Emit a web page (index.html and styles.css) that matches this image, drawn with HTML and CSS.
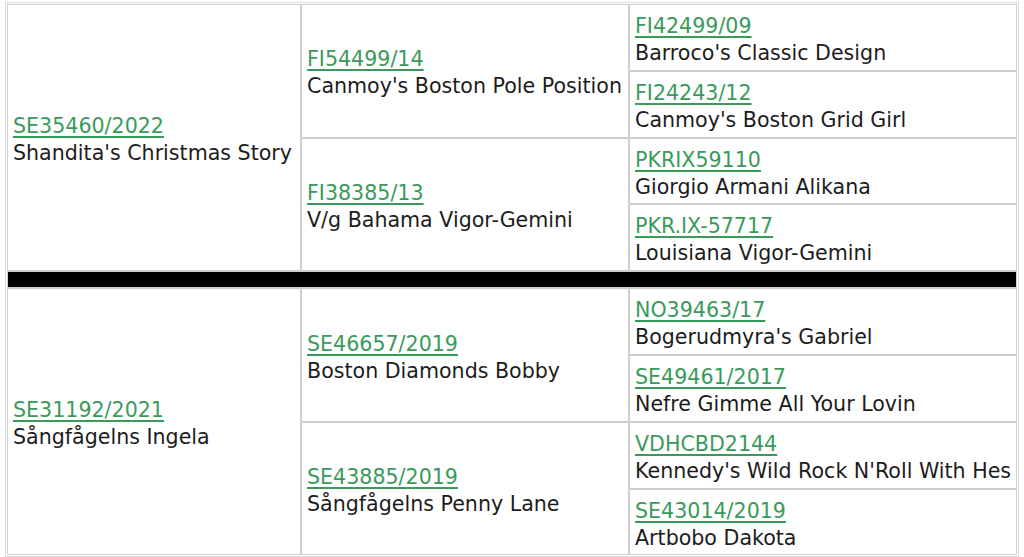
FILE: index.html
```html
<!DOCTYPE html>
<html>
<head>
<meta charset="utf-8">
<link rel="stylesheet" href="styles.css">
</head>
<body>
<table class="pedigree">
  <colgroup><col class="c1"><col class="c2"><col class="c3"></colgroup>
  <tr>
    <td rowspan="4"><a href="#">SE35460/2022</a><div class="name">Shandita's Christmas Story</div></td>
    <td rowspan="2"><a href="#">FI54499/14</a><div class="name">Canmoy's Boston Pole Position</div></td>
    <td><a href="#">FI42499/09</a><div class="name">Barroco's Classic Design</div></td>
  </tr>
  <tr>
    <td><a href="#">FI24243/12</a><div class="name">Canmoy's Boston Grid Girl</div></td>
  </tr>
  <tr>
    <td rowspan="2"><a href="#">FI38385/13</a><div class="name">V/g Bahama Vigor-Gemini</div></td>
    <td><a href="#">PKRIX59110</a><div class="name">Giorgio Armani Alikana</div></td>
  </tr>
  <tr>
    <td><a href="#">PKR.IX-57717</a><div class="name">Louisiana Vigor-Gemini</div></td>
  </tr>
  <tr class="sep"><td colspan="3"></td></tr>
  <tr>
    <td rowspan="4"><a href="#">SE31192/2021</a><div class="name">Sångfågelns Ingela</div></td>
    <td rowspan="2"><a href="#">SE46657/2019</a><div class="name">Boston Diamonds Bobby</div></td>
    <td><a href="#">NO39463/17</a><div class="name">Bogerudmyra's Gabriel</div></td>
  </tr>
  <tr>
    <td><a href="#">SE49461/2017</a><div class="name">Nefre Gimme All Your Lovin</div></td>
  </tr>
  <tr>
    <td rowspan="2"><a href="#">SE43885/2019</a><div class="name">Sångfågelns Penny Lane</div></td>
    <td><a href="#">VDHCBD2144</a><div class="name">Kennedy's Wild Rock N'Roll With Hes</div></td>
  </tr>
  <tr>
    <td><a href="#">SE43014/2019</a><div class="name">Artbobo Dakota</div></td>
  </tr>
</table>
</body>
</html>
```
FILE: styles.css
```css
html, body {
  background: #ffffff;
}
body {
  margin: 2px 5px;
  font-family: "DejaVu Sans", Verdana, sans-serif;
  font-size: 20.6px;
  color: #1c1c1c;
}
.pedigree {
  width: 1014px;
  table-layout: fixed;
  border-collapse: separate;
  border-spacing: 0;
  border: 1px solid #dcdcdc;
  padding: 1px;
}
.c1 { width: 294px; }
.c2 { width: 328px; }
.pedigree td {
  border: 1px solid #cfcfcf;
  padding: 8px 5px 2.8px;
  line-height: 27px;
  vertical-align: middle;
  white-space: nowrap;
  overflow: hidden;
}
.pedigree a {
  color: #3a9a5b;
  text-decoration: underline;
  text-underline-offset: 3px;
}
.name {
  color: #1c1c1c;
}
.pedigree .sep td {
  background: #000000;
  height: 15px;
  padding: 0;
  line-height: 0;
}
```
